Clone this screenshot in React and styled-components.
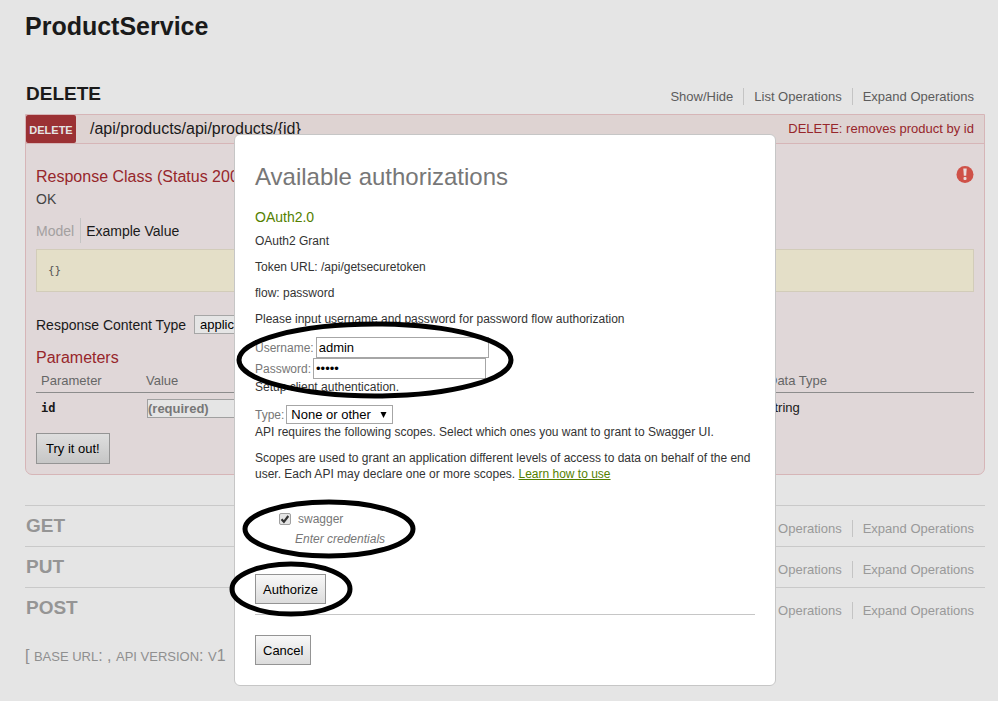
import React from 'react';
import styled, { createGlobalStyle } from 'styled-components';

const GlobalStyle = createGlobalStyle`
  * { box-sizing: border-box; }
  body {
    margin: 0;
    background: #e5e5e5;
    color: #1a1a1a;
    font-family: "Liberation Sans", Arial, sans-serif;
    font-size: 14px;
    line-height: 16px;
  }
  h1, h2, h3, h4, p, ul { margin: 0; padding: 0; }
  button, input, select { font-family: inherit; }
`;

const Page = styled.main`
  padding: 11px 13px 20px 25px;
`;

const ServiceTitle = styled.h1`
  font-size: 25px;
  line-height: 30px;
`;

const Resource = styled.section`
  border-bottom: ${(p) => (p.$last ? 'none' : '1px solid #c9c9c9')};
`;

const ResourceHeader = styled.header`
  display: flex;
  justify-content: space-between;
  align-items: center;
  height: 40px;
  padding: 0 11px 0 1px;
  color: ${(p) => (p.$active ? '#1a1a1a' : '#959595')};
`;

const ResourceName = styled.h2`
  font-size: 19px;
  line-height: 24px;
`;

const ResourceLinks = styled.ul`
  display: flex;
  list-style: none;
  padding-top: 4px;
`;

const LinkItem = styled.li`
  padding: 0 10px;
  border-left: 1px solid #c4c4c4;
  &:first-child { border-left: none; }
  &:last-child { padding-right: 0; }
`;

const ResourceLink = styled.a`
  color: ${(p) => (p.$active ? '#5c5c5c' : '#999')};
  font-size: 13px;
  text-decoration: none;
`;

const Operation = styled.article`
  margin-bottom: 30px;
  border: 1px solid #d6b5b7;
  border-radius: 0 0 7px 7px;
  background: #e0d7d8;
`;

const OperationHeader = styled.header`
  display: flex;
  align-items: center;
  height: 29px;
  border-bottom: 1px solid #d6b5b7;
  background: #ded3d2;
`;

const MethodBadge = styled.span`
  width: 50px;
  height: 28px;
  border-radius: 2px;
  background: #9b3134;
  color: #e5e5e5;
  font-size: 11px;
  line-height: 30px;
  font-weight: bold;
  text-align: center;
`;

const OperationPath = styled.span`
  flex: 1;
  padding-left: 14px;
  font-size: 16px;
`;

const OperationSummary = styled.span`
  padding-right: 10px;
  color: #97262b;
  font-size: 13px;
`;

const OperationBody = styled.div`
  padding: 22px 10px 10px;
`;

const BodyTop = styled.div`
  display: flex;
  justify-content: space-between;
  align-items: flex-start;
`;

const SectionTitle = styled.h4`
  color: #97262b;
  font-size: 16px;
  line-height: 22px;
  font-weight: normal;
`;

const StatusText = styled.p`
  color: #444;
  line-height: 22px;
`;

const Tabs = styled.div`
  display: flex;
  margin: 8px 0 6px;
`;

const Tab = styled.button`
  height: 25px;
  padding: ${(p) => (p.$selected ? '0 0 0 5px' : '0 6px 0 0')};
  border: none;
  border-left: ${(p) => (p.$selected ? '1px solid #c4c4c4' : 'none')};
  background: none;
  color: ${(p) => (p.$selected ? '#1a1a1a' : '#a3a0a0')};
  font-size: 14px;
`;

const Snippet = styled.pre`
  height: 43px;
  margin: 0 0 23px;
  padding: 0 11px;
  border: 1px solid #d2ccb9;
  background: #e4dfc8;
  color: #555;
  font: 11px/41px "DejaVu Sans Mono", monospace;
`;

const ContentType = styled.label`
  display: flex;
  align-items: center;
  gap: 8px;
  height: 19px;
  margin-bottom: 13px;
`;

const Select = styled.select`
  height: 19px;
  padding: 0 1px;
  border: 1px solid #a6a6a6;
  border-radius: 0;
  background: ${(p) => (p.$dim ? '#e5e5e5' : '#fff')};
  color: #000;
  font-size: 13px;
`;

const TypeSelect = styled(Select)`
  width: 107px;
  appearance: none;
  padding: 0 4px;
  background: #fff url("data:image/svg+xml,%3Csvg xmlns='http://www.w3.org/2000/svg' width='8' height='8'%3E%3Cpath d='M0.5 1h6L3.5 7z'/%3E%3C/svg%3E") no-repeat right 4px center;
`;

const ParamTable = styled.table`
  width: 100%;
  margin-bottom: 10px;
  border-collapse: collapse;
  text-align: left;

  th {
    height: 23px;
    padding: 1px 5px 0;
    border-bottom: 1px solid #8c8c8c;
    color: #666;
    font-size: 13px;
    font-weight: normal;
  }
  td {
    height: 31px;
    padding: 1px 5px 0;
    font-size: 13px;
  }
  td:first-child { font: bold 12px "DejaVu Sans Mono", monospace; }
`;

const ParamCol = styled.col`
  width: ${(p) => p.$width};
`;

const ParamInput = styled.input`
  display: block;
  width: 300px;
  height: 19px;
  margin-left: 1px;
  padding: 0;
  border: 1px solid #a0a0a0;
  background: #e5e5e5;
  font-size: 13px;
  font-weight: bold;
  &::placeholder { color: #777; }
`;

const Button = styled.button`
  height: ${(p) => (p.$dim ? '31px' : '30px')};
  padding: 0 ${(p) => (p.$dim ? '9px' : '7px')};
  border: 1px solid #949494;
  border-radius: 0;
  background: ${(p) => (p.$dim
    ? 'linear-gradient(#dedede, #c6c6c6)'
    : 'linear-gradient(#f8f8f8, #dcdcdc)')};
  color: #000;
  font-size: 13px;
`;

const Footer = styled.footer`
  padding-top: 18px;
  color: #8f8f8f;
  font-size: 16px;
  line-height: 20px;
`;

const Caps = styled.span`
  font-size: 13px;
  text-transform: uppercase;
`;

const Overlay = styled.div`
  position: fixed;
  inset: 0;
  display: flex;
  justify-content: center;
  align-items: flex-start;
  padding: 134px 0 0 12px;
`;

const Dialog = styled.section`
  position: relative;
  width: 100%;
  max-width: 542px;
  padding: 25px 20px 20px;
  border: 1px solid #c6c6c6;
  border-radius: 6px;
  background: #fff;
  color: #333;
  font-size: 12px;
`;

const DialogTitle = styled.h2`
  margin-bottom: 15px;
  color: #777;
  font-size: 24px;
  line-height: 34px;
  font-weight: normal;
`;

const SchemeName = styled.h3`
  margin-bottom: 8px;
  color: #547f00;
  font-size: 14px;
  line-height: 16px;
  font-weight: normal;
`;

const Paragraph = styled.p`
  margin-bottom: 10px;
`;

const Field = styled.div`
  display: flex;
  align-items: center;
  gap: 2px;
  color: #777;
`;

const TextInput = styled.input`
  width: 173px;
  height: 21px;
  padding: 0 2px;
  border: 1px solid #a6a6a6;
  background: #fff;
  color: #000;
  font-size: 13px;
`;

const DocLink = styled.a`
  color: #547f00;
`;

const ScopeItem = styled.div`
  padding: 19px 0 0 24px;
  color: #777;
`;

const Checkbox = styled.input`
  appearance: none;
  width: 12px;
  height: 12px;
  margin: 0 5px 0 0;
  border: 1px solid #a0a0a0;
  border-radius: 2px;
  background: linear-gradient(#eee, #ddd);
  &:checked {
    background: #e4e4e4 url("data:image/svg+xml,%3Csvg xmlns='http://www.w3.org/2000/svg' width='10' height='10'%3E%3Cpath d='M1.5 5.2l2.4 2.6L8.3 2' fill='none' stroke='%23333' stroke-width='2.2'/%3E%3C/svg%3E") no-repeat center;
  }
`;

const ScopeNote = styled.p`
  padding: 4px 0 0 16px;
  font-style: italic;
`;

const AuthorizeArea = styled.div`
  margin-bottom: 20px;
  padding: 27px 0 10px;
  border-bottom: 1px solid #c6c6c6;
`;

const Marks = styled.svg`
  position: absolute;
  left: -6px;
  top: 180px;
  pointer-events: none;
  fill: none;
  stroke: #000;
  stroke-width: 5;
`;

const LINKS = ['Show/Hide', 'List Operations', 'Expand Operations'];

function Header({ name, active }) {
  return (
    <ResourceHeader $active={active}>
      <ResourceName>{name}</ResourceName>
      <ResourceLinks>
        {LINKS.map((text) => (
          <LinkItem key={text}>
            <ResourceLink href="#" $active={active}>{text}</ResourceLink>
          </LinkItem>
        ))}
      </ResourceLinks>
    </ResourceHeader>
  );
}

const FirstResource = styled(Resource)`
  padding-top: 33px;
`;

function ErrorIcon() {
  return (
    <svg width="18" height="18" viewBox="0 0 18 18" role="img" aria-label="Error">
      <circle cx="9" cy="8.5" r="8.5" fill="#cf5148" />
      <path d="M7.3 2.5h3.4l-.5 7.2H7.8z" fill="#e9dcdc" />
      <rect x="7.5" y="11.1" width="3" height="2.8" rx="1" fill="#e9dcdc" />
    </svg>
  );
}

function AuthDialog() {
  return (
    <Overlay>
      <Dialog role="dialog" aria-labelledby="auth-title">
        <DialogTitle id="auth-title">Available authorizations</DialogTitle>
        <SchemeName>OAuth2.0</SchemeName>
        <Paragraph>OAuth2 Grant</Paragraph>
        <Paragraph>Token URL: /api/getsecuretoken</Paragraph>
        <Paragraph>flow: password</Paragraph>
        <Paragraph>Please input username and password for password flow authorization</Paragraph>
        <Field>
          <label htmlFor="username">Username:</label>
          <TextInput id="username" type="text" defaultValue="admin" />
        </Field>
        <Field>
          <label htmlFor="password">Password:</label>
          <TextInput id="password" type="password" defaultValue="admin" />
        </Field>
        <Paragraph>Setup client authentication.</Paragraph>
        <Field>
          <label htmlFor="auth-type">Type:</label>
          <TypeSelect id="auth-type">
            <option>None or other</option>
          </TypeSelect>
        </Field>
        <Paragraph>
          API requires the following scopes. Select which ones you want to grant to Swagger UI.
        </Paragraph>
        <Paragraph>
          Scopes are used to grant an application different levels of access to data on behalf of
          the end user. Each API may declare one or more scopes.{' '}
          <DocLink href="#">Learn how to use</DocLink>
        </Paragraph>
        <ScopeItem>
          <Field>
            <Checkbox id="scope" type="checkbox" defaultChecked />
            <label htmlFor="scope">swagger</label>
          </Field>
          <ScopeNote>Enter credentials</ScopeNote>
        </ScopeItem>
        <AuthorizeArea>
          <Button type="button">Authorize</Button>
        </AuthorizeArea>
        <Button type="button">Cancel</Button>
        <Marks width="290" height="310" aria-hidden="true">
          <ellipse cx="146" cy="45" rx="136" ry="36" />
          <ellipse cx="100" cy="214" rx="84" ry="27" />
          <ellipse cx="62" cy="274" rx="59" ry="25" />
        </Marks>
      </Dialog>
    </Overlay>
  );
}

export default function App() {
  return (
    <>
      <GlobalStyle />
      <Page>
        <ServiceTitle>ProductService</ServiceTitle>
        <FirstResource>
          <Header name="DELETE" active />
          <Operation>
            <OperationHeader>
              <MethodBadge>DELETE</MethodBadge>
              <OperationPath>/api/products/api/products/&#123;id&#125;</OperationPath>
              <OperationSummary>DELETE: removes product by id</OperationSummary>
            </OperationHeader>
            <OperationBody>
              <BodyTop>
                <SectionTitle>Response Class (Status 200)</SectionTitle>
                <ErrorIcon />
              </BodyTop>
              <StatusText>OK</StatusText>
              <Tabs>
                <Tab type="button">Model</Tab>
                <Tab type="button" $selected>Example Value</Tab>
              </Tabs>
              <Snippet>{'{}'}</Snippet>
              <ContentType>
                Response Content Type
                <Select $dim>
                  <option>application/json</option>
                </Select>
              </ContentType>
              <SectionTitle>Parameters</SectionTitle>
              <ParamTable>
                <colgroup>
                  <ParamCol $width="105px" />
                  <ParamCol />
                  <ParamCol $width="211px" />
                </colgroup>
                <thead>
                  <tr>
                    <th>Parameter</th>
                    <th>Value</th>
                    <th>Data Type</th>
                  </tr>
                </thead>
                <tbody>
                  <tr>
                    <td>id</td>
                    <td><ParamInput aria-label="id" placeholder="(required)" /></td>
                    <td>string</td>
                  </tr>
                </tbody>
              </ParamTable>
              <Button type="button" $dim>Try it out!</Button>
            </OperationBody>
          </Operation>
        </FirstResource>
        <Resource><Header name="GET" /></Resource>
        <Resource><Header name="PUT" /></Resource>
        <Resource $last><Header name="POST" /></Resource>
        <Footer>
          [ <Caps>base url</Caps>: , <Caps>api version</Caps>: <Caps>v</Caps>1
        </Footer>
      </Page>
      <AuthDialog />
    </>
  );
}
